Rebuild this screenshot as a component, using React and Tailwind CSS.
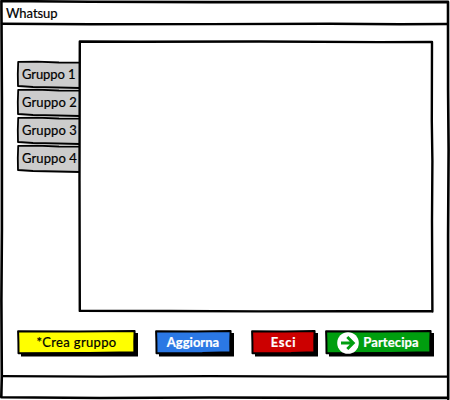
import React from "react";

// Hand-drawn stroke decoration that fills the box it sits in.
function Sketch({ w, h, d, fill = "none", sw = 2.4, shadow }) {
  return (
    <svg
      aria-hidden="true"
      className="pointer-events-none absolute inset-0 overflow-visible"
      width={w}
      height={h}
      viewBox={`0 0 ${w} ${h}`}
    >
      {shadow && <path d={shadow} fill="#000" />}
      <path d={d} fill={fill} stroke="#000" strokeWidth={sw} strokeLinejoin="round" strokeLinecap="round" />
    </svg>
  );
}

function Tab({ label, spacing }) {
  return (
    <li className="relative flex h-7 w-[63px] items-start pl-[5px]">
      <Sketch w={63} h={28} fill="#cccccc" sw={1.8} d="M1.2 .8 L20 .7 L42 1.5 L63 1.6 V27 L40 26.5 L16 26 L1 25 L.8 13 Z" />
      <span className={`relative whitespace-nowrap text-[13px] leading-[26px] ${spacing}`}>{label}</span>
    </li>
  );
}

function SketchButton({ w, fill, className, children }) {
  return (
    <button type="button" className={`relative flex h-[27px] shrink-0 items-start justify-center whitespace-nowrap text-[13px] leading-6 ${className}`}>
      <Sketch
        w={w}
        h={27}
        fill={fill}
        sw={2}
        shadow={`M4 23 H${w - 5} V3 H${w} V26.4 H4 Z`}
        d={`M1.1 1.2 L${w * 0.5} 1.5 L${w - 3.4} 1.1 L${w - 3.7} 12 L${w - 3.6} 22.2 L${w * 0.6} 23 L1.5 23.2 L1.4 12 Z`}
      />
      {children}
    </button>
  );
}

export default function App() {
  return (
    <div className="relative flex h-[400px] w-[450px] flex-col overflow-hidden bg-white font-['Lato','Liberation_Sans',sans-serif] text-black [-webkit-text-stroke:0.2px]">
      <Sketch
        w={450}
        h={400}
        sw={2.6}
        d="M1.4 1 L90 1.8 L210 2.1 L350 2.1 L448 1.9 L448.1 90 L448.6 150 L448.1 235 L448.2 399 M448 397.7 L330 397.9 L210 397.5 L100 398 L1.3 397.2 L1.8 376 L1.4 300 L1.9 230 L1.9 100 L1.4 1"
      />
      <header className="relative flex h-[25px] shrink-0 items-start pl-[6px]">
        <Sketch w={450} h={25} sw={2.4} d="M2 23.7 L90 24.3 L210 24.1 L330 23.8 L400 24.2 L447 24" />
        <h1 className="relative text-[13px] leading-[26px] tracking-[-0.05px]">Whatsup</h1>
      </header>

      <main className="flex h-[350px] shrink-0 flex-col pl-[17px]">
        <div className="flex pt-4">
          <ul className="flex flex-col pt-5">
            <Tab label="Gruppo 1" spacing="tracking-[-0.1px]" />
            <Tab label="Gruppo 2" spacing="tracking-[0.1px]" />
            <Tab label="Gruppo 3" spacing="tracking-[0.1px]" />
            <Tab label="Gruppo 4" spacing="tracking-[0.1px]" />
          </ul>
          <section className="relative -ml-[1px] h-[271px] w-[354px] shrink-0 bg-white">
            <Sketch
              w={354}
              h={271}
              d="M.8 .5 L60 .8 L180 .5 L300 1.1 L353 .9 L352.8 80 L353.4 120 L353 180 L353.4 270.5 M353.4 270.1 L270 270.2 L180 270.4 L90 270 L.8 269.9 L.5 140 L.8 .5"
            />
          </section>
        </div>
        <div className="mt-[18px] flex">
          <SketchButton w={121} fill="#ffff00" className="w-[121px] pr-[2px] tracking-[0.35px]">
            <span className="relative">*Crea gruppo</span>
          </SketchButton>
          <SketchButton w={79} fill="#2b78e4" className="ml-[17px] w-[79px] pr-[3px] font-bold tracking-[0px] text-white">
            <span className="relative">Aggiorna</span>
          </SketchButton>
          <SketchButton w={67} fill="#cc0000" className="ml-[17px] w-[67px] pr-[2px] font-bold tracking-[0.7px] text-white">
            <span className="relative">Esci</span>
          </SketchButton>
          <SketchButton w={109} fill="#009e0f" className="ml-[7px] w-[109px] gap-1 pr-[3px] font-bold tracking-[0.1px] text-white">
            <svg aria-hidden="true" className="relative mt-[2px] shrink-0" width="22" height="22" viewBox="0 0 22 22">
              <circle cx="11" cy="11" r="10.8" fill="#fff" />
              <path d="M4 11 H16 M10.3 5 L16.3 11 L10.3 17" fill="none" stroke="#009e0f" strokeWidth="2.9" />
            </svg>
            <span className="relative">Partecipa</span>
          </SketchButton>
        </div>
      </main>

      <footer className="relative h-[25px] shrink-0">
        <Sketch w={450} h={25} sw={2.2} d="M2 1.2 L100 1.7 L210 1.2 L330 1.7 L447 1.7" />
      </footer>
    </div>
  );
}
